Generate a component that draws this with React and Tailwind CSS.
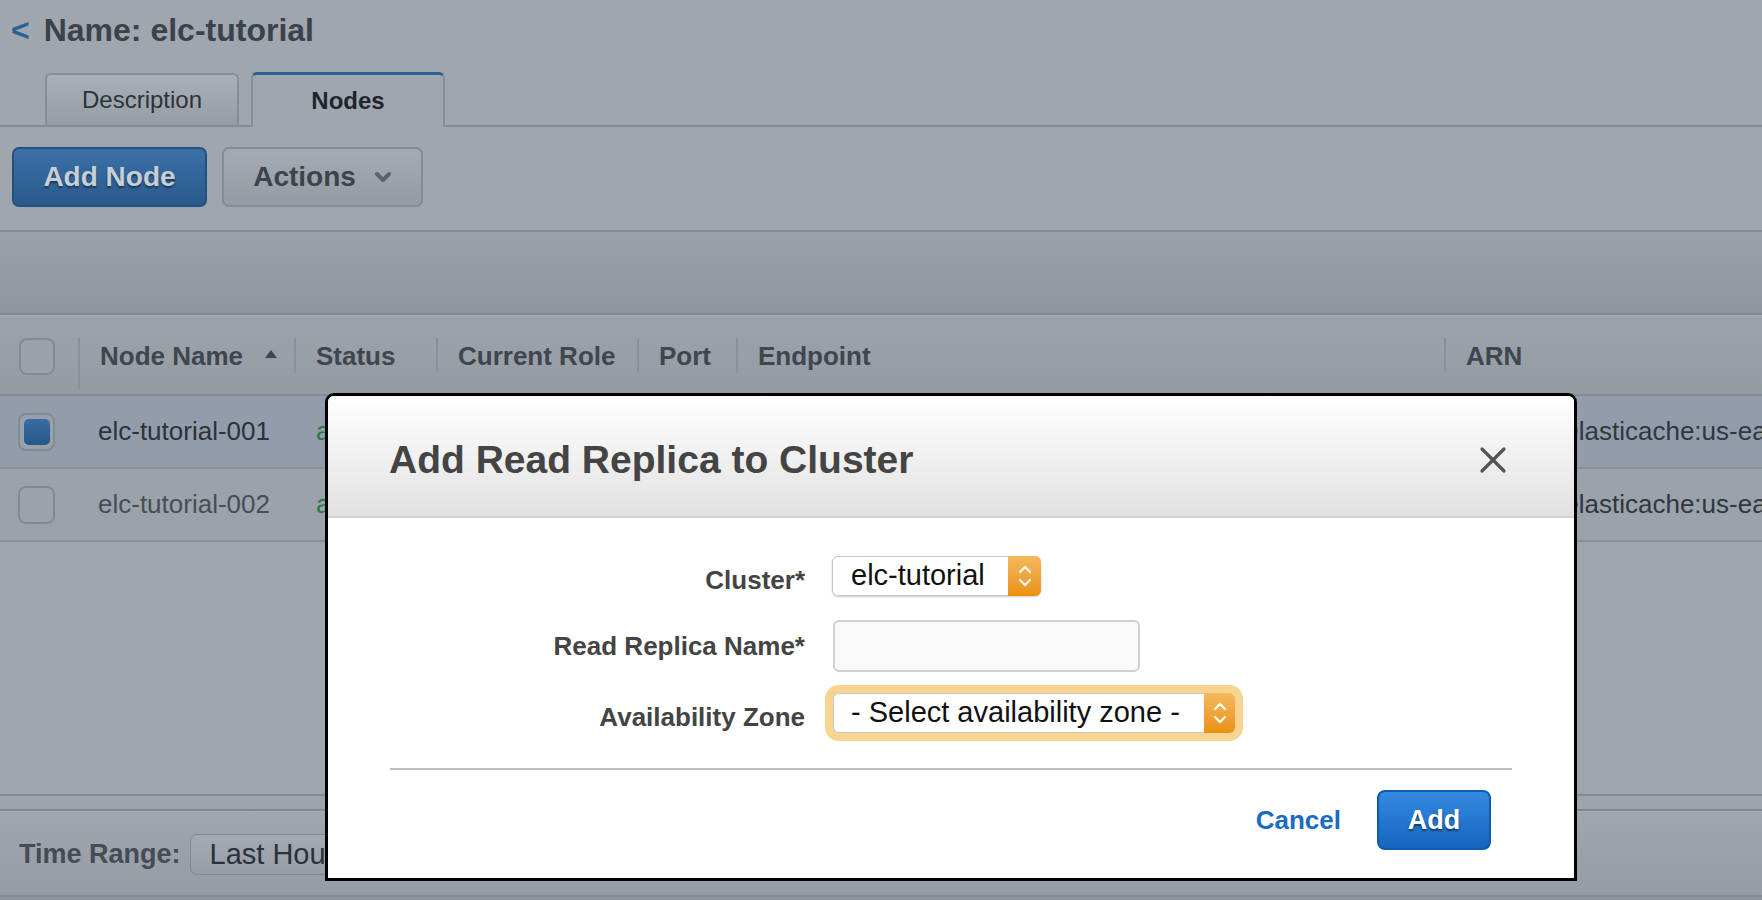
import React from 'react';

function UpDown({ className = '' }) {
  return (
    <svg viewBox="0 0 14 22" className={className} fill="none" stroke="white" strokeWidth="2.2" strokeLinecap="round" strokeLinejoin="round">
      <path d="M2 7 L7 2 L12 7" />
      <path d="M2 15 L7 20 L12 15" />
    </svg>
  );
}

const columns = [
  { label: 'Node Name', w: 'w-[216px]', sort: true, first: true },
  { label: 'Status', w: 'w-[142px]' },
  { label: 'Current Role', w: 'w-[201px]' },
  { label: 'Port', w: 'w-[99px]' },
  { label: 'Endpoint', w: 'w-[708px]' },
  { label: 'ARN', w: 'flex-1' },
];

const nodes = [
  { name: 'elc-tutorial-001', selected: true },
  { name: 'elc-tutorial-002', selected: false },
];

export default function App() {
  return (
    <div className="relative h-[900px] w-full overflow-hidden bg-[#a0a6ad] font-['Liberation_Sans',Arial,Helvetica,sans-serif]">
      {/* Page title */}
      <div className="flex items-center gap-[14px] pl-[11px] pt-[12px] leading-[36px]">
        <span className="text-[32px] font-bold text-[#2c5f96]">&lt;</span>
        <h1 className="text-[32px] font-bold text-[#3b424a]">Name: elc-tutorial</h1>
      </div>

      {/* Tabs */}
      <div className="mt-[24px] flex items-end gap-[12px] border-b-2 border-[#858b92] pl-[45px]">
        <div className="flex h-[52px] w-[194px] items-center justify-center rounded-t-[6px] border-2 border-b-0 border-[#878d94] bg-linear-to-b from-[#a9afb6] to-[#979da4] text-[24px] text-[#2d333a]">
          Description
        </div>
        <div className="-mb-[2px] flex h-[55px] w-[194px] items-center justify-center rounded-t-[6px] border-2 border-t-[3px] border-b-0 border-[#878d94] border-t-[#2d5f95] bg-[#a0a6ad] text-[24px] font-bold text-[#1f252b]">
          Nodes
        </div>
      </div>

      {/* Toolbar buttons */}
      <div className="mt-[20px] flex gap-[15px] pl-[12px]">
        <button className="h-[60px] w-[195px] rounded-[7px] border-2 border-[#24507f] bg-linear-to-b from-[#3b70a7] to-[#295a8c] text-[28px] font-bold text-[#c6ced7] [text-shadow:0_2px_2px_rgba(0,0,0,0.45)]">
          Add Node
        </button>
        <button className="flex h-[60px] w-[201px] items-center justify-center gap-[18px] rounded-[7px] border-2 border-[#858b92] bg-linear-to-b from-[#a5abb2] to-[#959ba2] text-[28px] font-bold text-[#3d434a]">
          Actions
          <svg viewBox="0 0 18 12" className="h-[12px] w-[18px]" fill="none" stroke="#5c6269" strokeWidth="4" strokeLinecap="round" strokeLinejoin="round">
            <path d="M3 3 L9 9 L15 3" />
          </svg>
        </button>
      </div>

      {/* Filter band */}
      <div className="mt-[23px] h-[83px] border-t-2 border-[#858b92] bg-linear-to-b from-[#9aa1a9] to-[#8f969e]" />
      <div className="h-[2px] bg-[#80878e]" />
      <div className="h-px bg-[#a7adb3]" />

      {/* Table header */}
      <div className="flex h-[80px] border-b-2 border-[#858b92] bg-linear-to-b from-[#9ca3ab] to-[#949ba3]">
        <div className="w-[78px] pl-[19px] pt-[22px]">
          <div className="h-[37px] w-[36px] rounded-[8px] border-2 border-[#848a91] bg-[#9aa1a9]" />
        </div>
        {columns.map((c) => (
          <div key={c.label} className={`${c.w} flex items-start pt-[22px]`}>
            <span className={`${c.first ? 'h-[51px]' : 'h-[35px]'} w-[2px] bg-[#8b9199]`} />
            <span className="ml-[20px] whitespace-nowrap text-[26px] font-bold leading-[36px] text-[#3f464e]">{c.label}</span>
            {c.sort && (
              <svg viewBox="0 0 12 8" className="ml-[22px] mt-[12px] h-[8px] w-[12px]">
                <path d="M6 0 L12 8 L0 8 Z" fill="#3f464e" />
              </svg>
            )}
          </div>
        ))}
      </div>

      {/* Table rows (the middle columns sit under the dialog) */}
      {nodes.map((n) => (
        <div key={n.name} className={`flex h-[73px] items-center border-b-2 border-[#898f96] ${n.selected ? 'bg-[#939cab]' : 'bg-[#9ba2aa]'}`}>
          <div className="w-[78px] pl-[18px]">
            <div className={`flex h-[38px] w-[37px] items-center justify-center rounded-[8px] border-2 border-[#838a92] ${n.selected ? 'bg-[#98a0ab]' : 'bg-[#9ca3ab]'}`}>
              {n.selected && <div className="h-[26px] w-[26px] rounded-[5px] bg-linear-to-b from-[#3a6ca3] to-[#275689]" />}
            </div>
          </div>
          <div className={`w-[216px] pl-[20px] text-[26px] ${n.selected ? 'text-[#2b323a]' : 'text-[#474e56]'}`}>{n.name}</div>
          <div className="w-[142px] pl-[22px] text-[26px] text-[#2a7a44]">available</div>
          <div className="w-[1008px]" />
          <div className="flex-1 overflow-hidden whitespace-nowrap pl-[22px] text-[26px] text-[#30373e]">
            arn:aws:elasticache:us-east-1:123456789012:cluster:{n.name}
          </div>
        </div>
      ))}

      <div className="h-[252px] bg-[#9fa5ac]" />

      {/* Monitoring bar */}
      <div className="h-[15px] border-t-2 border-[#858b92] bg-[#9ea4ab]" />
      <div className="h-[2px] bg-[#80878e]" />
      <div className="h-px bg-[#a7adb3]" />
      <div className="flex h-[85px] items-center border-b-2 border-[#858b92] bg-linear-to-b from-[#a0a6ad] to-[#959ca3] pl-[19px] pt-[2px]">
        <span className="text-[27px] font-bold text-[#454c54]">Time Range:</span>
        <div className="ml-[9px] flex h-[41px] w-[260px] items-center rounded-[7px] border border-[#80878e] bg-linear-to-b from-[#a4aab1] to-[#989ea5] pl-[19px] text-[29px] text-[#2b3239]">
          Last Hour
        </div>
      </div>
      <div className="h-[10px] bg-[#8e959c]" />

      {/* Modal */}
      <div className="absolute left-[325px] top-[393px] flex h-[488px] w-[1252px] flex-col overflow-hidden rounded-t-[9px] border-[3px] border-black bg-white">
        <div className="flex h-[122px] items-center justify-between border-b-2 border-[#d2d2d2] bg-linear-to-b from-white to-[#e2e2e2] pl-[61px] pr-[67px] pt-[8px]">
          <h2 className="text-[39px] font-bold leading-[46px] text-[#444444]">Add Read Replica to Cluster</h2>
          <svg viewBox="0 0 28 28" className="h-[28px] w-[28px]" fill="none" stroke="#555555" strokeWidth="3.2" strokeLinecap="round">
            <path d="M3 3 L25 25 M25 3 L3 25" />
          </svg>
        </div>

        <div className="grid grid-cols-[477px_1fr] items-center gap-x-[27px] pt-[38px]">
          <label className="pt-[8px] text-right text-[26px] font-bold leading-[30px] text-[#444444]">Cluster*</label>
          <div className="flex h-[40px] w-[209px] rounded-[6px] border border-[#c9c9c9] bg-white shadow-[0_1px_2px_rgba(0,0,0,0.2)]">
            <span className="flex flex-1 items-center pl-[18px] text-[29px] text-[#111111]">elc-tutorial</span>
            <span className="-my-px -mr-px flex w-[33px] items-center justify-center rounded-r-[6px] bg-linear-to-b from-[#f5b95c] to-[#ea9106]">
              <UpDown className="h-[22px] w-[14px]" />
            </span>
          </div>

          <label className="mt-[24px] text-right text-[26px] font-bold leading-[30px] text-[#444444]">Read Replica Name*</label>
          <input
            type="text"
            className="ml-px mt-[24px] h-[52px] w-[307px] rounded-[6px] border-2 border-[#d0d0d0] bg-[#f9f9f9] outline-none"
          />

          <label className="mt-[21px] pt-[8px] text-right text-[26px] font-bold leading-[30px] text-[#444444]">Availability Zone</label>
          <div className="ml-px mt-[21px] flex h-[40px] w-[402px] rounded-[6px] border border-[#c9c9c9] bg-white shadow-[0_0_0_8px_#f7d48f]">
            <span className="flex flex-1 items-center pl-[17px] text-[29px] text-[#111111]">- Select availability zone -</span>
            <span className="-my-px -mr-px flex w-[31px] items-center justify-center rounded-r-[6px] bg-linear-to-b from-[#f5b95c] to-[#ea9106]">
              <UpDown className="h-[22px] w-[14px]" />
            </span>
          </div>
        </div>

        <div className="mx-[62px] mt-[35px] h-[2px] bg-[#bdbdbd]" />

        <div className="mt-[20px] flex items-center justify-end gap-[36px] pr-[83px]">
          <button className="text-[26px] font-bold text-[#1a6bc6]">Cancel</button>
          <button className="h-[60px] w-[114px] rounded-[8px] border-2 border-[#0d5bb0] bg-linear-to-b from-[#358ae0] to-[#1565be] text-[27px] font-bold text-white [text-shadow:0_2px_2px_rgba(0,0,0,0.5)]">
            Add
          </button>
        </div>
      </div>
    </div>
  );
}
